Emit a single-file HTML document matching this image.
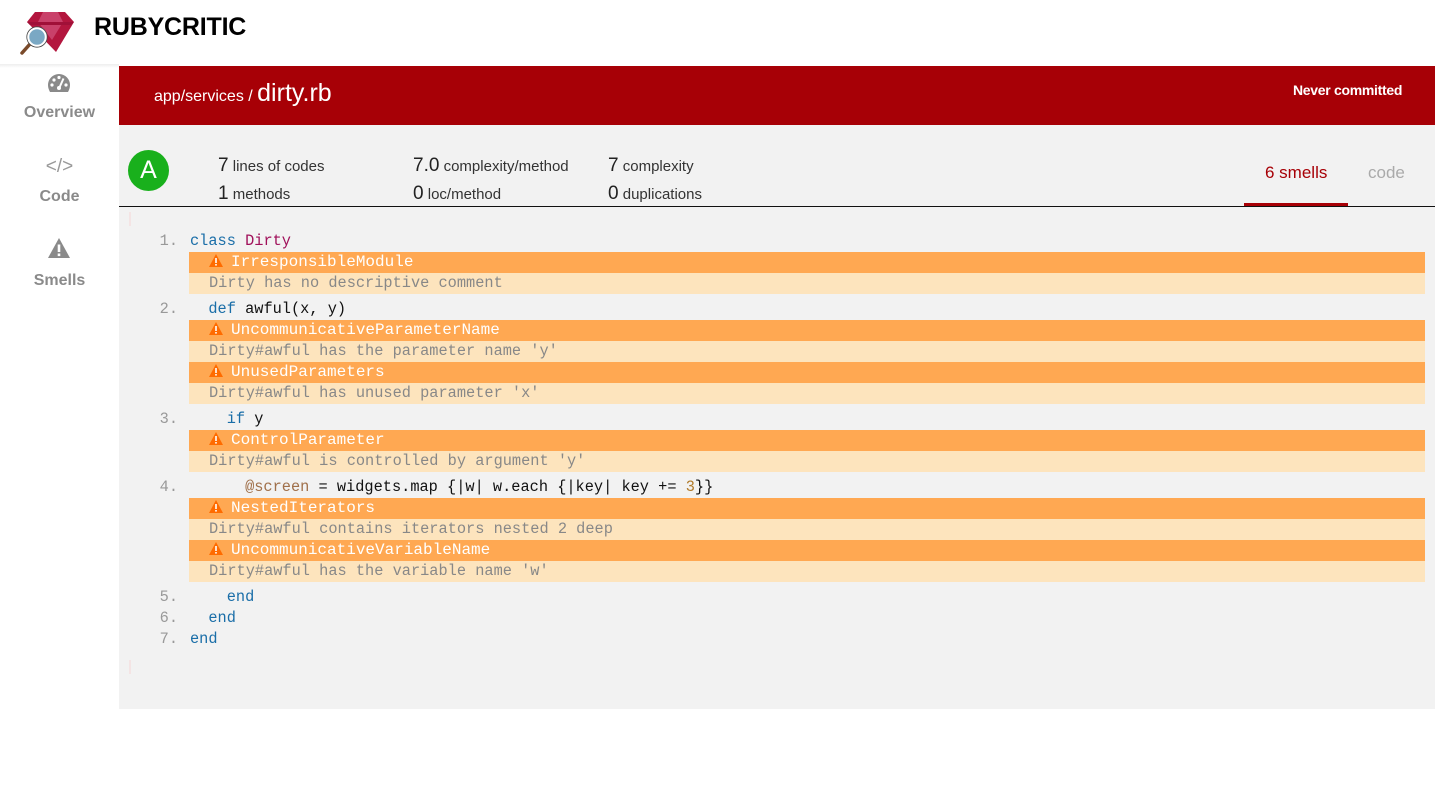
<!DOCTYPE html>
<html><head><meta charset="utf-8"><style>
*{margin:0;padding:0;box-sizing:border-box}
body{width:1435px;height:799px;background:#fff;font-family:"Liberation Sans",Arial,sans-serif;position:relative;overflow:hidden}
.a{position:absolute}
.nav{position:absolute;left:0;width:119px;text-align:center;color:#8a8a8a;font-weight:bold;font-size:16px}
.mono{font-family:"Liberation Mono",monospace;font-size:15.3px;white-space:pre}
.ln{position:absolute;left:140px;width:38px;text-align:right;color:#999;line-height:21px}
.cd{position:absolute;left:190px;line-height:21px;color:#111}
.sh{position:absolute;left:189px;width:1236px;height:21px;background:#ffa852;color:#fff;line-height:21px;padding-left:20px;font-size:16px}
.sd{position:absolute;left:189px;width:1236px;height:21px;background:#fde4bd;color:#888;line-height:21px;padding-left:20px}
.sh svg{vertical-align:-1px;margin-right:8px}
.k{color:#1a6ea8}.c{color:#a0105a}.i{color:#a0704a}.n{color:#b07a2a}
.st{position:absolute;font-size:15px;color:#333}
.st b{font-weight:normal;font-size:19px;color:#222}
</style></head><body>
<svg class="a" style="left:18px;top:10px" width="60" height="46" viewBox="0 0 60 46">
<polygon points="17,2 47,2 56,12 38,42 9,12" fill="#b3163e"/>
<polygon points="25,2 40,2 45,12 34,30 20,12" fill="#c9416a"/>
<polygon points="9,12 56,12 53,15 12,15" fill="#a01038"/>
<line x1="4" y1="43" x2="12" y2="34" stroke="#7a4a2a" stroke-width="3.5" stroke-linecap="round"/>
<circle cx="19" cy="27" r="9" fill="#7aa8c4" stroke="#fff" stroke-width="2.5"/>
<circle cx="19" cy="27" r="10.2" fill="none" stroke="#444" stroke-width="0.8"/>
</svg>
<div class="a" style="left:94px;top:13px;font-size:25px;font-weight:bold;color:#000;letter-spacing:-0.2px">RUBYCRITIC</div>
<div class="a" style="left:0;top:64px;width:119px;height:4px;background:linear-gradient(#eee,#fff)"></div>
<svg class="a" style="left:47px;top:73px" width="24" height="20" viewBox="0 0 24 20"><path d="M12 1A11 11 0 0 0 1 12c0 3 1 5 2 7h18c1-2 2-4 2-7A11 11 0 0 0 12 1z" fill="#8a8a8a"/><circle cx="5" cy="12" r="1.6" fill="#fff"/><circle cx="7" cy="7" r="1.6" fill="#fff"/><circle cx="12" cy="4.5" r="1.6" fill="#fff"/><circle cx="19" cy="12" r="1.6" fill="#fff"/><path d="M16.5 5.5L12.7 14" stroke="#fff" stroke-width="2"/><circle cx="12" cy="15" r="2" fill="#fff"/></svg>
<div class="nav" style="top:104px">Overview</div>
<div class="nav" style="top:156px;font-weight:normal;font-size:19px;color:#999">&lt;/&gt;</div>
<div class="nav" style="top:188px">Code</div>
<svg class="a" style="left:47px;top:237px" width="24" height="22" viewBox="0 0 24 22"><path d="M12 1L23 21H1z" fill="#8a8a8a"/><rect x="10.7" y="7.5" width="2.6" height="7.5" fill="#fff"/><rect x="10.7" y="16.5" width="2.6" height="2.6" fill="#fff"/></svg>
<div class="nav" style="top:272px">Smells</div>
<div class="a" style="left:119px;top:66px;width:1316px;height:59px;background:#a70006"></div>
<div class="a" style="left:154px;top:77px;color:#fff;font-size:16px;line-height:32px">app/services / <span style="font-size:25px">dirty.rb</span></div>
<div class="a" style="left:1293px;top:82px;color:#fff;font-size:14px;font-weight:bold;letter-spacing:-0.3px">Never committed</div>
<div class="a" style="left:119px;top:125px;width:1316px;height:81px;background:#f2f2f2"></div>
<div class="a" style="left:119px;top:206px;width:1316px;height:1px;background:#111"></div>
<div class="a" style="left:128px;top:150px;width:41px;height:41px;border-radius:50%;background:#19b01c;color:#fff;font-size:25px;text-align:center;line-height:41px">A</div>
<div class="st" style="left:218px;top:155px"><b>7</b> lines of codes</div>
<div class="st" style="left:218px;top:183px"><b>1</b> methods</div>
<div class="st" style="left:413px;top:155px"><b>7.0</b> complexity/method</div>
<div class="st" style="left:413px;top:183px"><b>0</b> loc/method</div>
<div class="st" style="left:608px;top:155px"><b>7</b> complexity</div>
<div class="st" style="left:608px;top:183px"><b>0</b> duplications</div>
<div class="a" style="left:1265px;top:163px;color:#a70006;font-size:17px">6 smells</div>
<div class="a" style="left:1244px;top:203px;width:104px;height:3px;background:#a70006"></div>
<div class="a" style="left:1368px;top:163px;color:#aaa;font-size:17px">code</div>
<div class="a" style="left:119px;top:207px;width:1316px;height:502px;background:#f2f2f2"></div>
<div class="a" style="left:129px;top:212px;width:2px;height:14px;background:#f4e4e4"></div>
<div class="a" style="left:129px;top:660px;width:2px;height:14px;background:#f4e4e4"></div>
<div class="mono">
<div class="ln" style="top:231px">1.</div><div class="cd" style="top:231px"><span class="k">class</span> <span class="c">Dirty</span></div>
<div class="sh" style="top:252px"><svg width="14" height="13" viewBox="0 0 14 13"><path d="M7 0L14 13H0z" fill="#ff6b00"/><rect x="6.2" y="4" width="1.6" height="5" fill="#fff"/><rect x="6.2" y="10" width="1.6" height="1.6" fill="#fff"/></svg>IrresponsibleModule</div>
<div class="sd" style="top:273px">Dirty has no descriptive comment</div>
<div class="ln" style="top:299px">2.</div><div class="cd" style="top:299px">  <span class="k">def</span> awful(x, y)</div>
<div class="sh" style="top:320px"><svg width="14" height="13" viewBox="0 0 14 13"><path d="M7 0L14 13H0z" fill="#ff6b00"/><rect x="6.2" y="4" width="1.6" height="5" fill="#fff"/><rect x="6.2" y="10" width="1.6" height="1.6" fill="#fff"/></svg>UncommunicativeParameterName</div>
<div class="sd" style="top:341px">Dirty#awful has the parameter name 'y'</div>
<div class="sh" style="top:362px"><svg width="14" height="13" viewBox="0 0 14 13"><path d="M7 0L14 13H0z" fill="#ff6b00"/><rect x="6.2" y="4" width="1.6" height="5" fill="#fff"/><rect x="6.2" y="10" width="1.6" height="1.6" fill="#fff"/></svg>UnusedParameters</div>
<div class="sd" style="top:383px">Dirty#awful has unused parameter 'x'</div>
<div class="ln" style="top:409px">3.</div><div class="cd" style="top:409px">    <span class="k">if</span> y</div>
<div class="sh" style="top:430px"><svg width="14" height="13" viewBox="0 0 14 13"><path d="M7 0L14 13H0z" fill="#ff6b00"/><rect x="6.2" y="4" width="1.6" height="5" fill="#fff"/><rect x="6.2" y="10" width="1.6" height="1.6" fill="#fff"/></svg>ControlParameter</div>
<div class="sd" style="top:451px">Dirty#awful is controlled by argument 'y'</div>
<div class="ln" style="top:477px">4.</div><div class="cd" style="top:477px">      <span class="i">@screen</span> = widgets.map {|w| w.each {|key| key += <span class="n">3</span>}}</div>
<div class="sh" style="top:498px"><svg width="14" height="13" viewBox="0 0 14 13"><path d="M7 0L14 13H0z" fill="#ff6b00"/><rect x="6.2" y="4" width="1.6" height="5" fill="#fff"/><rect x="6.2" y="10" width="1.6" height="1.6" fill="#fff"/></svg>NestedIterators</div>
<div class="sd" style="top:519px">Dirty#awful contains iterators nested 2 deep</div>
<div class="sh" style="top:540px"><svg width="14" height="13" viewBox="0 0 14 13"><path d="M7 0L14 13H0z" fill="#ff6b00"/><rect x="6.2" y="4" width="1.6" height="5" fill="#fff"/><rect x="6.2" y="10" width="1.6" height="1.6" fill="#fff"/></svg>UncommunicativeVariableName</div>
<div class="sd" style="top:561px">Dirty#awful has the variable name 'w'</div>
<div class="ln" style="top:587px">5.</div><div class="cd" style="top:587px">    <span class="k">end</span></div>
<div class="ln" style="top:608px">6.</div><div class="cd" style="top:608px">  <span class="k">end</span></div>
<div class="ln" style="top:629px">7.</div><div class="cd" style="top:629px"><span class="k">end</span></div>
</div>
</body></html>
